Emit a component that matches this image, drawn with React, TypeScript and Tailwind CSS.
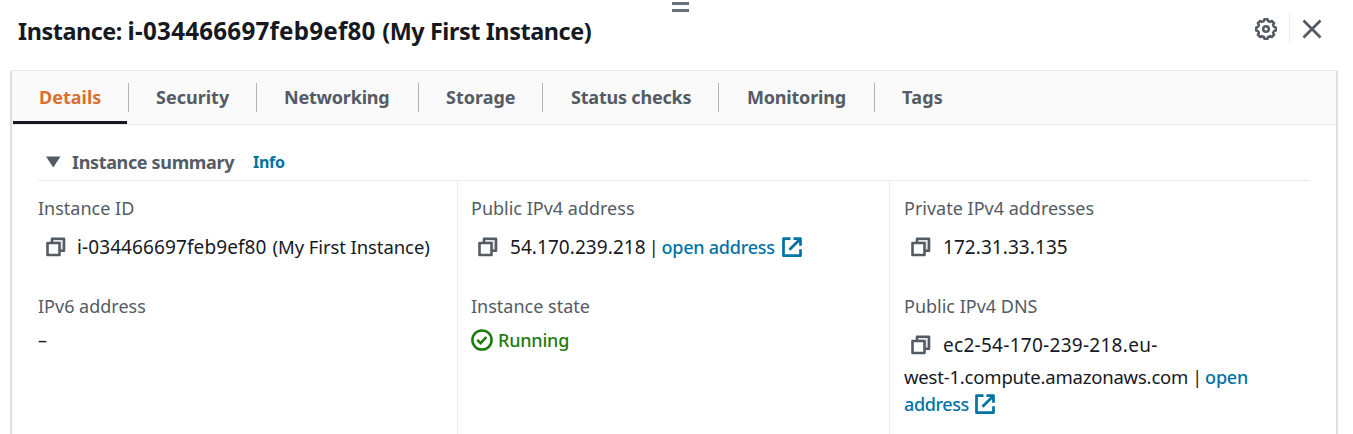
import React from 'react';

function CopyIcon() {
  return (
    <svg className="block h-[22px] w-[22px] shrink-0" viewBox="0 -0.4 22 22" fill="none" stroke="#545b64" strokeWidth="2.6" strokeLinejoin="round">
      <path d="M7 6V2.4h12v12h-3.800" fill="#e3e6e8" />
      <path d="M2.500 6.600h12v12h-12z" fill="#fff" />
    </svg>
  );
}

function ExternalIcon() {
  return (
    <svg className="block h-[22px] w-[22px] shrink-0" viewBox="0 -0.3 22 22" fill="none" stroke="#0073a5" strokeWidth="2.7" strokeLinejoin="round">
      <path d="M9.500 2.400H2.500v17h17V13" />
      <path d="M12.500 2.400h7v7M19 2.900L8.400 13.500" />
      <path d="M14.500 2.500h5v5z" fill="#0073a5" stroke="none" />
    </svg>
  );
}

// Eight-toothed outline: each tooth is two outer points followed by two inner points.
const gearPoints = Array.from({ length: 32 }, (_, i) => {
  const step = i % 4;
  const offsets = [-9.5, 9.5, 15, 30];
  const angle = ((Math.floor(i / 4) * 45 + offsets[step]) * Math.PI) / 180;
  const radius = step < 2 ? 9.9 : 8.2;
  return `${(12 + radius * Math.sin(angle)).toFixed(2)},${(12 - radius * Math.cos(angle)).toFixed(2)}`;
}).join(' ');

function GearIcon() {
  return (
    <svg className="block h-[24px] w-[24px]" viewBox="0 0 24 24" fill="none" stroke="#545b64" strokeWidth="2.500" strokeLinejoin="round">
      <polygon points={gearPoints} />
      <circle cx="12" cy="12" r="2.800" />
    </svg>
  );
}

function Label({ children }: { children: React.ReactNode }) {
  return <div className="h-[26px] whitespace-nowrap leading-[26px] text-[#545b64]">{children}</div>;
}

const tabs = [
  { name: 'Details', cell: 'w-[117px] pl-[27px] tracking-[0px]' },
  { name: 'Security', cell: 'w-[128px] pl-[27px] tracking-[0px]' },
  { name: 'Networking', cell: 'w-[162px] pl-[27px]' },
  { name: 'Storage', cell: 'w-[124px] pl-[27px] tracking-[0px]' },
  { name: 'Status checks', cell: 'w-[176px] pl-[28px]' },
  { name: 'Monitoring', cell: 'w-[156px] pl-[28px]' },
  { name: 'Tags', cell: 'pl-[27px] tracking-[0.2px]' },
];

export default function App() {
  return (
    <div className="flex h-[434px] w-[1353px] flex-col overflow-hidden bg-white font-['Noto_Sans',sans-serif] text-[18px] text-[#16191f]">
      <header className="relative flex h-[70px] shrink-0 justify-between pl-[18px] pr-[30px]">
        <h1 className="pt-[14px] text-[23.4px] font-bold leading-[33px] whitespace-nowrap">
          <span className="tracking-[-0.45px]">Instance: </span>
          <span className="text-[24.2px] tracking-[0.22px]">i-034466697feb9ef80 </span>
          <span className="tracking-[-0.42px]">(My First Instance)</span>
        </h1>
        <div className="absolute left-[672px] top-[2px] flex h-[10px] w-[17px] flex-col justify-between">
          <span className="h-[3px] bg-[#687078]" />
          <span className="h-[3px] bg-[#687078]" />
        </div>
        <div className="mt-[13px] flex h-[32px] items-center">
          <GearIcon />
          <span className="ml-[11px] h-[32px] w-px bg-[#eaeded]" />
          <svg className="ml-[11px] block h-[22px] w-[22px]" viewBox="0 0 22 22" fill="none" stroke="#545b64" strokeWidth="2.8">
            <path d="M2.500 2.500l17 17M19.500 2.500l-17 17" />
          </svg>
        </div>
      </header>

      <section className="ml-[10px] flex w-[1328px] grow flex-col rounded-t-[2px] border-x-2 border-t border-x-[#dddfdf] border-t-[#e6e8e8]">
        <nav className="flex h-[54px] shrink-0 border-b border-[#e6e8e8] bg-[#fafafa] font-bold tracking-[-0.2px] text-[#545b64]">
          {tabs.map((t, i) => (
            <div key={t.name} className={`relative flex items-center whitespace-nowrap ${t.cell} ${i === 0 ? 'text-[#d9702f]' : ''}`}>
              {t.name}
              {i === 0 && <span className="absolute bottom-0 left-[1px] h-[3px] w-[114px] bg-[#16191f]" />}
              {i < tabs.length - 1 && <span className="absolute right-0 top-[12px] h-[29px] w-px bg-[#aab7b8]" />}
            </div>
          ))}
        </nav>

        <div className="flex grow flex-col pl-[26px] pr-[26px]">
          <div className="flex h-[56px] shrink-0 items-center border-b border-[#eaeded] pt-[18px]">
            <svg className="ml-[8px] block h-[12px] w-[15px]" viewBox="0 0 15 12" fill="#545b64">
              <path d="M0 0.500h14.500L7.250 11.500z" />
            </svg>
            <h2 className="ml-[11px] font-bold leading-[26px] tracking-[-0.35px] text-[#545b64]">Instance summary</h2>
            <a className="ml-[19px] text-[16px] font-bold leading-[26px] tracking-[-0.3px] text-[#0073a5]">Info</a>
          </div>
          <div className="flex grow">
            <div className="w-[420px] shrink-0 border-r border-[#eaeded] pt-[14px]">
              <Label>Instance ID</Label>
              <div className="mt-[13px] flex h-[26px] items-center whitespace-nowrap pl-[7px] leading-[26px]">
                <CopyIcon />
                <span className="ml-[10px] text-[19px] tracking-[0.1px]">i-034466697feb9ef80</span>
                <span className="ml-[6px] text-[18.5px] tracking-[-0.09px]">(My First Instance)</span>
              </div>
              <div className="mt-[33px]"><Label>IPv6 address</Label></div>
              <div className="mt-[8px] leading-[26px]">–</div>
            </div>
            <div className="w-[432px] shrink-0 border-r border-[#eaeded] pl-[13px] pt-[14px]">
              <Label>Public IPv4 address</Label>
              <div className="mt-[13px] flex h-[26px] items-center whitespace-nowrap pl-[6px] leading-[26px]">
                <CopyIcon />
                <span className="ml-[11px] text-[19px] tracking-[0.06px]">54.170.239.218</span>
                <span className="ml-[3px]">|</span>
                <a className="ml-[3px] font-medium tracking-[-0.25px] text-[#0073a5]">open address</a>
                <span className="ml-[6px] flex"><ExternalIcon /></span>
              </div>
              <div className="mt-[33px]"><Label>Instance state</Label></div>
              <div className="mt-[8px] flex h-[26px] items-center text-[#1d7a0c]">
                <svg className="block h-[22px] w-[22px]" viewBox="0 0 22 22" fill="none" stroke="#1d7a0c" strokeWidth="2.500">
                  <circle cx="11" cy="11" r="9.600" />
                  <path d="M6.200 10.800l3.400 3.400L15.400 8" />
                </svg>
                <span className="ml-[5px] font-medium leading-[26px] tracking-[-0.2px]">Running</span>
              </div>
            </div>
            <div className="pl-[14px] pt-[14px]">
              <Label>Private IPv4 addresses</Label>
              <div className="mt-[13px] flex h-[26px] items-center pl-[6px] leading-[26px]">
                <CopyIcon />
                <span className="ml-[11px] text-[19px] tracking-[0.06px]">172.31.33.135</span>
              </div>
              <div className="mt-[33px]"><Label>Public IPv4 DNS</Label></div>
              <div className="mt-[13px] flex h-[26px] items-center pl-[6px] leading-[26px]">
                <CopyIcon />
                <span className="ml-[11px] text-[19px] tracking-[0.28px]">ec2-54-170-239-218.eu-</span>
              </div>
              <div className="mt-[6px] flex whitespace-nowrap leading-[26px]">
                <span className="text-[18.5px] tracking-[-0.2px]">west-1.compute.amazonaws.com</span>
                <span className="ml-[4px]">|</span>
                <a className="ml-[3px] font-medium tracking-[-0.2px] text-[#0073a5]">open</a>
              </div>
              <div className="mt-px flex h-[26px] items-center font-medium leading-[26px] tracking-[-0.4px] text-[#0073a5]">
                <a>address</a>
                <span className="ml-[5px] flex"><ExternalIcon /></span>
              </div>
            </div>
          </div>
        </div>
      </section>
    </div>
  );
}
